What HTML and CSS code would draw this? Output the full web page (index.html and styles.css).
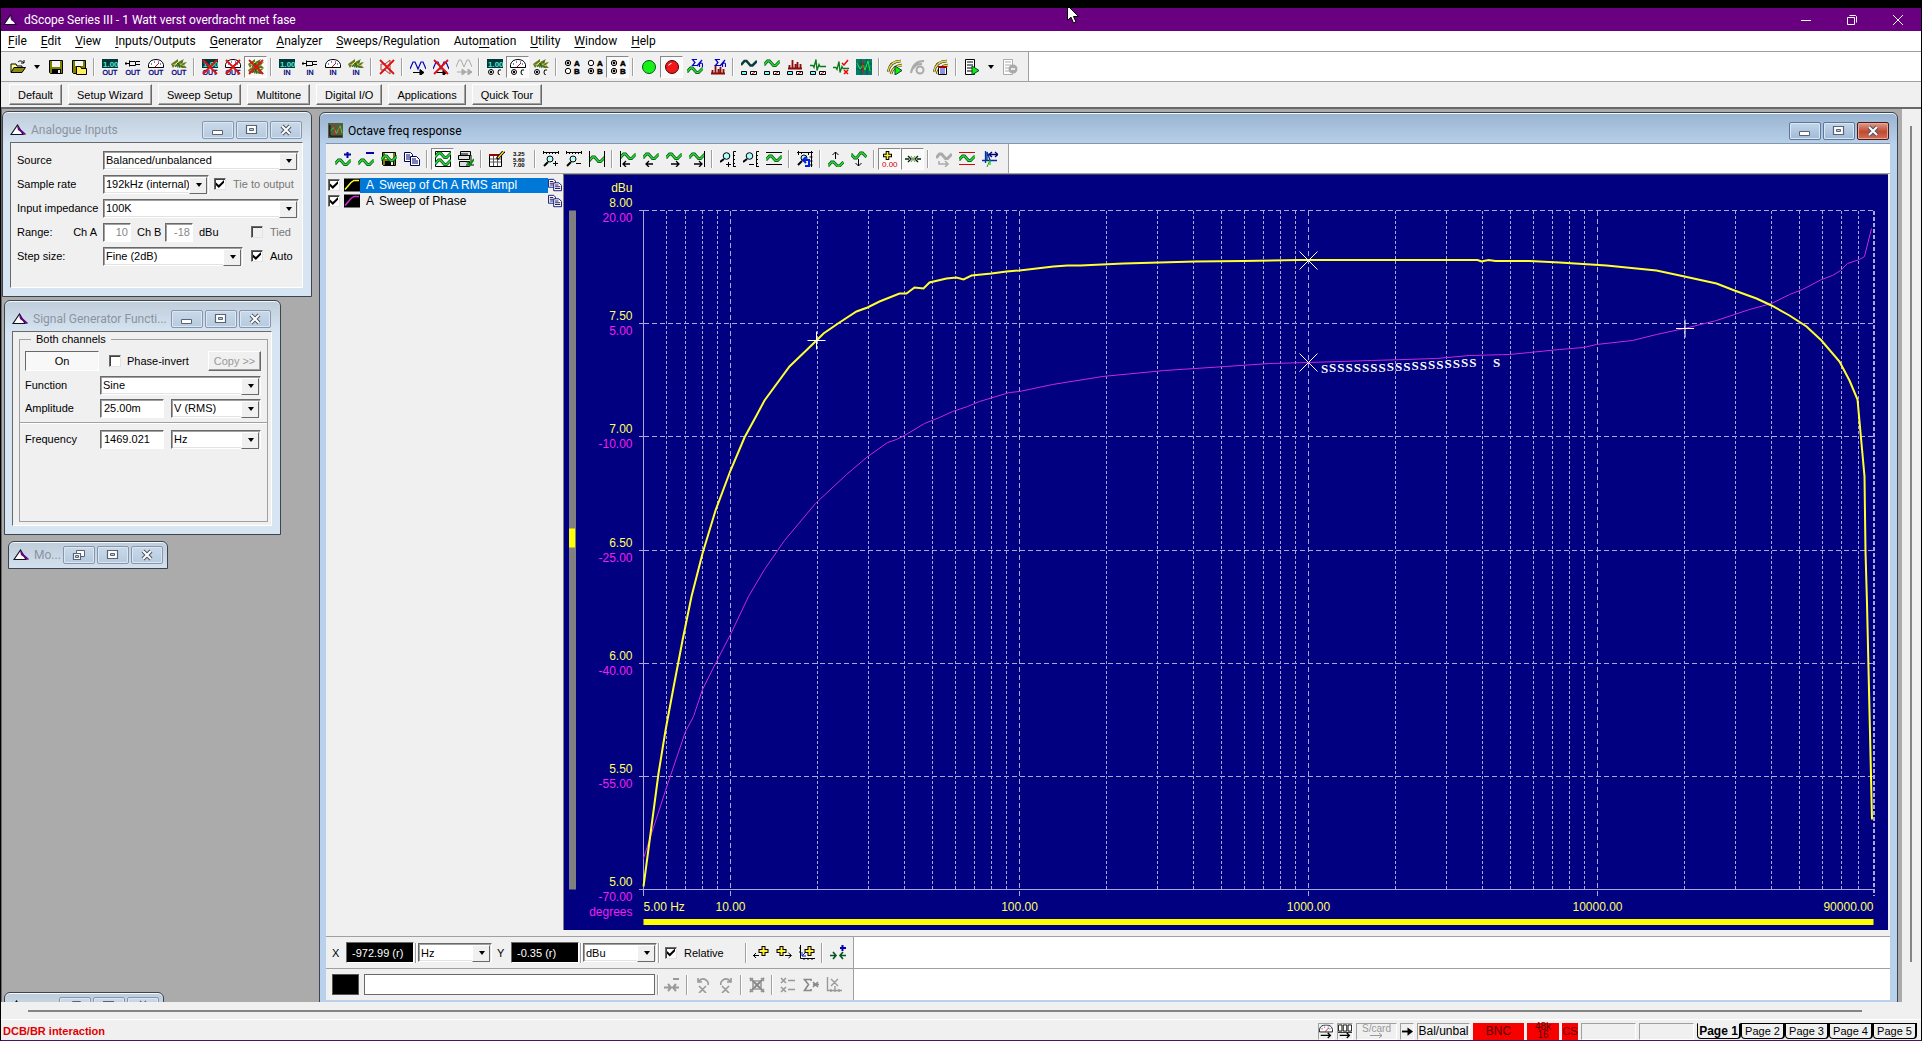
FILE: index.html
```html
<!DOCTYPE html>
<html lang="en">
<head>
<meta charset="utf-8">
<title>dScope Series III - 1 Watt verst overdracht met fase</title>
<link rel="stylesheet" href="styles.css">
</head>
<body>
<svg class="defs" aria-hidden="true">
  <symbol id="logo" viewBox="0 0 16 12"><path d="M7.500 1 1 10.500h12z" fill="#fff" stroke="#112" stroke-width="1.200"/><path d="M7 2l9 8-1 1-7-5z" fill="#608"/></symbol>
  <symbol id="open" viewBox="0 0 16 16"><path d="M1 13V5h5l1 2h5v2" fill="#ff8" stroke="#000"/><path d="M1 13.500 4 8.500h11.500l-3.500 5z" fill="#8a8a10" stroke="#000"/><path d="M8 3c2-2 4-1 6 1m0-3v3h-3" fill="none" stroke="#000"/></symbol>
  <symbol id="save" viewBox="0 0 16 16"><path d="M1.500 1.500h13v13h-12l-1-1z" fill="#808000" stroke="#000"/><path d="M4 2h8v6H4z" fill="#f4f4f4"/><path d="M4 10h9v5H4z"/><path d="M10 11h2v3h-2z" fill="#eee"/></symbol>
  <symbol id="saveas" viewBox="0 0 16 16"><path d="M1.500 1.500h13v13h-12l-1-1z" fill="#808000" stroke="#000"/><path d="M4 2h8v5H4z" fill="#f4f4f4"/><path d="M5.500 15.500v-8h4l1 2h5v6z" fill="#ffee60" stroke="#000"/></symbol>
  <symbol id="lcd" viewBox="0 0 16 16"><path d="M0 0h16v9H0z" fill="#003838"/><text x="1" y="8" font-size="8" font-weight="700" fill="#50e8d0">1.00</text></symbol>
  <symbol id="jack" viewBox="0 0 16 16"><path d="M0 4.500h4m7-2h4m-4 3h4M4.500 1.500v6m0-5h6v4h-6M1 3v3" fill="none" stroke="#000"/></symbol>
  <symbol id="meter" viewBox="0 0 16 16"><path d="M.5 8.500v-3Q2 .5 8 .5t7.500 5v3z" fill="#fff" stroke="#000"/><path d="M3 5h1m2-2h1m3 0h1m1 2h1" stroke="#00a"/><path d="M7 8l4-4" stroke="#d00"/></symbol>
  <symbol id="burst" viewBox="0 0 16 16"><path d="M0 5 7 0v3l6-3-2 4 5-1-3 3 3 3h-5l-3-2-1 2-3-3-2 3z" fill="#6b7520"/><path d="M1 5h3l4-3-2 4zM9 5l4-2-2 3 4 1-4 0z" fill="#ff6"/><path d="M4 8l3-4 2 5m2-7 0 6" fill="none" stroke="#063"/></symbol>
  <symbol id="out" viewBox="0 0 16 16"><text x="8" y="16" font-size="7" text-anchor="middle" fill="#00007c" stroke="#00007c" stroke-width=".3">OUT</text></symbol>
  <symbol id="in" viewBox="0 0 16 16"><text x="8" y="16" font-size="7" text-anchor="middle" fill="#00007c" stroke="#00007c" stroke-width=".3">IN</text></symbol>
  <symbol id="radios" viewBox="0 0 16 16"><circle cx="4" cy="13" r="2.500" fill="#fff" stroke="#000"/><circle cx="4" cy="13" r="1.200"/><path d="M14 11q-3-1-3 2t2 3" fill="#fff" stroke="#000"/></symbol>
  <symbol id="cross" viewBox="0 0 16 16"><path d="M1 1l14 14M15 1 1 15" stroke="#e01010" stroke-width="1.800"/></symbol>
  <symbol id="speaker" viewBox="0 0 16 16"><path d="M2 5h4l5-4v14l-5-4H2z" fill="#f4e4e4" stroke="#944"/></symbol>
  <symbol id="sine" viewBox="0 0 16 16"><path d="M0 10 3 3h2l3 7 3-7h2l3 7" fill="none" stroke="currentColor" stroke-width="1.200"/><path d="M3 13.500h10m-3-3 4 3-4 3z" fill="#000" stroke="#000"/></symbol>
  <symbol id="sineg" viewBox="0 0 16 16"><path d="M0 8 3 1h2l3 7 3-7h2l3 7" fill="none" stroke="#aaa"/><path d="M1 13h5m4 0h4M6 10l4 3-4 3zM12 10l4 3-4 3z" fill="#aaa" stroke="#aaa"/></symbol>
  <symbol id="ab" viewBox="0 0 16 16"><circle cx="4" cy="4" r="2.700" fill="#fff" stroke="#000"/><circle cx="4" cy="12" r="2.700" fill="#fff" stroke="#000"/><text x="10" y="7" font-size="8" font-weight="700" stroke="#000" stroke-width=".5">A</text><text x="10" y="15" font-size="8" font-weight="700" stroke="#000" stroke-width=".5">B</text></symbol>
  <symbol id="dot1" viewBox="0 0 16 16"><circle cx="4" cy="4" r="1.400"/></symbol>
  <symbol id="dot2" viewBox="0 0 16 16"><circle cx="4" cy="12" r="1.400"/></symbol>
  <symbol id="green" viewBox="0 0 16 16"><circle cx="8" cy="8" r="6.500" fill="#18f018" stroke="#052"/></symbol>
  <symbol id="red" viewBox="0 0 16 16"><circle cx="8" cy="8" r="6.500" fill="#f01818" stroke="#400"/><path d="M4.500 6.500q1-2 3-2" stroke="#fff" fill="none"/></symbol>
  <symbol id="wave" viewBox="0 0 16 16"><path d="M0 9 3.500 5h2l4 4.500h2L16 5" fill="none" stroke="#042" stroke-width="2.800"/><path d="M0 9 3.500 5h2l4 4.500h2L16 5" fill="none" stroke="#28dc28" stroke-width="1.600"/></symbol>
  <symbol id="wavegray" viewBox="0 0 16 16"><path d="M0 9 3.500 5h2l4 4.500h2L16 5" fill="none" stroke="#aaa" stroke-width="3"/></symbol>
  <symbol id="waveteal" viewBox="0 0 16 16"><path d="M0 9 3.500 5h2l4 4.500h2L16 5" fill="none" stroke="#063c3c" stroke-width="2.500"/></symbol>
  <symbol id="spec" viewBox="0 0 16 16"><path d="M1 9.500h14M2.500 9V6M5.500 9V1M8.500 9V5M10.500 9V3M13.500 9V5" fill="none" stroke="#8a0a0a" stroke-width="1.800"/></symbol>
  <symbol id="imp" viewBox="0 0 16 16"><path d="M0 6.500h3l1 2 2-8 1 11 2-6 1 2h6" fill="none" stroke="#087818" stroke-width="1.300"/></symbol>
  <symbol id="pair" viewBox="0 0 16 16"><path d="M.5 12.500h5v3h-5z" fill="#7ff" stroke="#000"/><path d="M9.500 12.500h6v3h-6z" fill="#fff" stroke="#000"/><path d="M11 15l3-2" stroke="#c00"/></symbol>
  <symbol id="sigma" viewBox="0 0 16 16"><path d="M10 .5H5.500L8 3.500 5.500 6.500H10M15 1l-5 6M12.500 8V5q2-2 3 0v3" fill="none" stroke="#0000c8" stroke-width="1.200"/></symbol>
  <symbol id="ticks" viewBox="0 0 16 16"><path d="M9 4l2 2 4-5M11 11l4 4m0-4-4 4" fill="none" stroke="#e00" stroke-width="1.500"/></symbol>
  <symbol id="screen" viewBox="0 0 16 16"><path d="M0 0h16v16H0z" fill="#087868"/><path d="M0 5h16M0 10h16M5 0v16M11 0v16" stroke="#055"/><path d="M1 4 4 10 7 6l2 5 3-9 2 10" fill="none" stroke="#2e2"/><path d="M7 2v12" stroke="#e00"/></symbol>
  <symbol id="appicon" viewBox="0 0 16 16"><path d="M0 0h16v16H0z" fill="#555c40"/><path d="M2 14V2m0 12h13" stroke="#000"/><path d="M3 8 6 5l3 6 4-8 2 8" fill="none" stroke="#3d3"/><path d="M7 3v10m5-8v6" stroke="#c22"/></symbol>
  <symbol id="curves" viewBox="0 0 16 16"><path d="M1 13Q3 2 14 2M4 15Q6 7 15 6" fill="none" stroke="#222" stroke-width="2.400"/><path d="M1 13Q3 2 14 2M4 15Q6 7 15 6" fill="none" stroke="#e8e040" stroke-width="1.300"/></symbol>
  <symbol id="curvesg" viewBox="0 0 16 16"><path d="M1 14Q3 2 14 2M3 10Q5 5 12 5" fill="none" stroke="#aaa" stroke-width="2"/><circle cx="10" cy="11" r="3.500" fill="#f0f0f0" stroke="#aaa" stroke-width="2"/></symbol>
  <symbol id="play" viewBox="0 0 16 16"><path d="M8 7l7 4.500L8 16z" fill="#1e1" stroke="#042"/></symbol>
  <symbol id="note" viewBox="0 0 16 16"><path d="M5.500 7.500h8v8h-8z" fill="#fff" stroke="#000"/><path d="M7 10h5m-5 2h5m-5 2h5" stroke="#22c"/><path d="M5 8h9" stroke="#a00" stroke-width="2"/></symbol>
  <symbol id="doc" viewBox="0 0 16 16"><path d="M1.500.5h9v15h-9z" fill="#fff" stroke="currentColor"/><path d="M3 3h6M3 6h6M3 9h5M3 12h6" stroke="currentColor"/></symbol>
  <symbol id="stopg" viewBox="0 0 16 16"><circle cx="11" cy="10" r="4.500" fill="#aaa"/><path d="M9 10h4" stroke="#fff" stroke-width="1.500"/></symbol>
  <symbol id="copy" viewBox="0 0 16 16"><path d="M.5 1.500h6l2 2v7h-8z" fill="#fff" stroke="#000060"/><path d="M6.500 5.500h6l3 3v6h-9z" fill="#fff" stroke="#000060"/><path d="M2 4h4M2 6h4M2 8h4M8 8h4m-4 2h6m-6 2h6" stroke="#000060"/></symbol>
  <symbol id="plus" viewBox="0 0 16 16"><path d="M12.500-1v7M9 2.500h7" stroke="#0000b0" stroke-width="2"/></symbol>
  <symbol id="minus" viewBox="0 0 16 16"><path d="M8 1h8" stroke="#0000b0" stroke-width="2"/></symbol>
  <symbol id="frame" viewBox="0 0 16 16"><path d="M.5.500h15v15H.5z" fill="none" stroke="#000"/></symbol>
  <symbol id="print" viewBox="0 0 16 16"><path d="M2.500.500h10v4h-10zM.5 4.500h11v4H.5zM1.500 10.500h10v5h-10z" fill="#ddd" stroke="#000"/><path d="M3 3h7M8 14h8M13 4v10" stroke="#000"/><path d="M9 11l3 3 4-6" fill="none" stroke="#090" stroke-width="2"/></symbol>
  <symbol id="table" viewBox="0 0 16 16"><path d="M.5 3.500h12v12H.5z" fill="#fff" stroke="#000"/><path d="M0 4h13" stroke="#900" stroke-width="2"/><path d="M1 8h11M1 11h11M4.500 5v10M8.500 5v10" stroke="#555"/><path d="M15 0 8 8" stroke="#000" stroke-width="3"/><path d="M15 0 9 7" stroke="#fd3" stroke-width="1.300"/></symbol>
  <symbol id="nums" viewBox="0 0 16 16"><text x="1" y="5" font-size="6" font-weight="700">3.25</text><text x="1" y="10.500" font-size="6" font-weight="700">5.60</text><text x="1" y="16" font-size="6" font-weight="700">7.00</text></symbol>
  <symbol id="magh" viewBox="0 0 16 16"><path d="M0 1.500h16M.5 0v3m3-2v2m3-2v2m3-2v2m3-2v2M15.500 0v3" stroke="#000"/><path d="M5 11 1 15" stroke="#000" stroke-width="2"/><circle cx="7" cy="8" r="3" fill="#aff" stroke="#000"/></symbol>
  <symbol id="magv" viewBox="0 0 16 16"><path d="M13.500.500v15m0-15H16m-2 4h1m-1 4h1m-1 4h1m-2 3h3" stroke="#000"/><path d="M4 8 0 11" stroke="#000" stroke-width="2"/><circle cx="6.500" cy="5" r="3.300" fill="#aff" stroke="#000"/></symbol>
  <symbol id="zin" viewBox="0 0 16 16"><path d="M10 12.500h5M12.500 10v5" stroke="#000"/></symbol>
  <symbol id="zout" viewBox="0 0 16 16"><path d="M10 12.500h5" stroke="#000"/></symbol>
  <symbol id="zinv" viewBox="0 0 16 16"><path d="M6 13.500h5M8.500 11v5" stroke="#000"/></symbol>
  <symbol id="zoutv" viewBox="0 0 16 16"><path d="M6 13.500h5" stroke="#000"/></symbol>
  <symbol id="sides" viewBox="0 0 16 16"><path d="M.5 0v16M15.500 0v16" stroke="#000"/></symbol>
  <symbol id="lside" viewBox="0 0 16 16"><path d="M.5 0v16" stroke="#000"/></symbol>
  <symbol id="rside" viewBox="0 0 16 16"><path d="M15.500 0v16" stroke="#000"/></symbol>
  <symbol id="arl" viewBox="0 0 16 16"><path d="M3 13h7M6 10l-3 3 3 3" fill="none" stroke="#000" stroke-width="1.300"/></symbol>
  <symbol id="arr" viewBox="0 0 16 16"><path d="M5 13h8m-3-3 3 3-3 3" fill="none" stroke="#000" stroke-width="1.300"/></symbol>
  <symbol id="bars" viewBox="0 0 16 16"><path d="M0 1.500h16M0 13.500h16" stroke="currentColor"/></symbol>
  <symbol id="undo" viewBox="0 0 16 16"><path d="M0 1.500h16M1.500 0v4m13-4v16m-3-14v2m-7-3v2m11 3h-3m3 4h-3m3 4h-3" stroke="#000"/><circle cx="7" cy="7" r="3" fill="#aff" stroke="#000"/><path d="M8 15h4V9H6m3-3L6 9l3 3" fill="none" stroke="#0020e0" stroke-width="2"/><path d="M5 10l-4 4" stroke="#000" stroke-width="2"/></symbol>
  <symbol id="wup" viewBox="0 0 16 16"><path d="M0 15l3.500-4h2l4 4h2l4-4" fill="none" stroke="#042" stroke-width="2.800"/><path d="M0 15l3.500-4h2l4 4h2l4-4" fill="none" stroke="#28dc28" stroke-width="1.600"/><path d="M7.500 8V1m-3 3 3-3 3 3" fill="none" stroke="#000"/></symbol>
  <symbol id="wdn" viewBox="0 0 16 16"><path d="M0 3l3.500 4h2l4-5h2l4 4" fill="none" stroke="#042" stroke-width="2.800"/><path d="M0 3l3.500 4h2l4-5h2l4 4" fill="none" stroke="#28dc28" stroke-width="1.600"/><path d="M7.500 8v7m-3-3 3 3 3-3" fill="none" stroke="#000"/></symbol>
  <symbol id="curval" viewBox="0 0 16 16"><path d="M5.500 0v9M1 4.500h9" stroke="#000" stroke-width="3.600"/><path d="M5.500 1v7M2 4.500h7" stroke="#fe3" stroke-width="1.600"/><text x="0" y="16" font-size="8" fill="#c00">0.00</text></symbol>
  <symbol id="curx" viewBox="0 0 16 16"><path d="M0 8h4M3 5l3 3-3 3M16 8h-4m1-3-3 3 3 3" fill="none" stroke="#021" stroke-width="1.400"/><path d="M6 5l4 6m0-6-4 6" stroke="#693"/></symbol>
  <symbol id="gloop" viewBox="0 0 16 16"><path d="M3 10v3h9m-3-3 3 3-3 3" fill="none" stroke="#aaa" stroke-width="1.500"/></symbol>
  <symbol id="blueaxis" viewBox="0 0 16 16"><path d="M3.500 0v12M0 9.500h15M5 9V1l3 8" fill="none" stroke="#0030a0" stroke-width="1.300"/><path d="M8 3.500h7M10 1 7 3.500 10 6m3-5 3 2.500L13 6" fill="none" stroke="#00007c" stroke-width="1.300"/><path d="M5 16l3-7v5" stroke="#0a0" fill="none"/></symbol>
  <symbol id="yplus" viewBox="0 0 16 16"><path d="M10.500 1v10M5.500 6h10" stroke="#000" stroke-width="4"/><path d="M10.500 2v8M6.500 6h8" stroke="#fe3" stroke-width="2"/></symbol>
  <symbol id="yplusl" viewBox="0 0 16 16"><path d="M5.500 1v10M.5 6h10" stroke="#000" stroke-width="4"/><path d="M5.500 2v8M1.500 6h8" stroke="#fe3" stroke-width="2"/></symbol>
  <symbol id="al2" viewBox="0 0 16 16"><path d="M0 10.500h6M3 8l-2.500 2.500L3 13" fill="none" stroke="#000"/></symbol>
  <symbol id="ar2" viewBox="0 0 16 16"><path d="M9 10.500h6M12.500 8l3 2.500-3 2.500" fill="none" stroke="#000"/></symbol>
  <symbol id="axes" viewBox="0 0 16 16"><path d="M1.500 0v13.500H16M5 15v-2m4 2v-2m4 2v-2M0 3h1M0 7h1" fill="none" stroke="#000"/><path d="M8 6l-5 5m0-4v4h4" fill="none" stroke="#0020c0"/></symbol>
  <symbol id="addm" viewBox="0 0 16 16"><path d="M0 10.500h6M16 10.500h-6M3 7l3 3.500L3 14m10-7-3 3.500 3 3.500" fill="none" stroke="#052" stroke-width="1.600"/><path d="M12.500 0v6M10 3h6" stroke="#0000b0" stroke-width="2"/></symbol>
  <symbol id="gdel" viewBox="0 0 16 16"><path d="M0 10.500h6M15 10.500h-5M4 7l3 3.500L4 14m8-7-3 3.500 3 3.500M9 2h6" fill="none" stroke="#999" stroke-width="2"/></symbol>
  <symbol id="grotl" viewBox="0 0 16 16"><path d="M4 9l7 7m0-7-7 7M3 1v4h4M3 5q4-5 8-2 3 2 2 5" fill="none" stroke="#999" stroke-width="1.600"/></symbol>
  <symbol id="grotr" viewBox="0 0 16 16"><path d="M4 9l7 7m0-7-7 7M13 1v4H9M13 5Q9 0 5 3 2 5 3 8" fill="none" stroke="#999" stroke-width="1.600"/></symbol>
  <symbol id="gx" viewBox="0 0 16 16"><path d="M1 1l14 14M15 1 1 15" stroke="#888" stroke-width="2"/><path d="M1 4l3-3m8 0 3 3M1 12l3 3m8 0 3-3M5 4h6M5 12h6M4 5v6m8-6v6" fill="none" stroke="#999" stroke-width="1.600"/></symbol>
  <symbol id="glist" viewBox="0 0 16 16"><path d="M1 1l5 5m0-5L1 6m0 4 5 5m0-5-5 5M8 3.500h7M8 12.500h7" stroke="#999" stroke-width="1.600"/></symbol>
  <symbol id="gsum" viewBox="0 0 16 16"><path d="M8 4V2.500H1.500l4 5-4 6H8V12M10 5l5 5m0-5-5 5M10 7.500h6" fill="none" stroke="#888" stroke-width="1.600"/></symbol>
  <symbol id="gchart" viewBox="0 0 16 16"><path d="M1.500 0v13.500H16M5 15v-3m4 3V9m4 6v-3M5 2l7 7m0-7-7 7" fill="none" stroke="#999" stroke-width="1.400"/></symbol>
  <symbol id="min" viewBox="0 0 14 12"><path d="M1.500 6.500h10v4h-10z" fill="#fff" stroke="#5a6373"/></symbol>
  <symbol id="max" viewBox="0 0 14 12"><path d="M1.500 1.500h10v8h-10z" fill="#fff" stroke="#5a6373" stroke-width="1.200"/><path d="M4.500 4.500h4v2h-4z" fill="#bcd" stroke="#5a6373"/></symbol>
  <symbol id="cls" viewBox="0 0 14 12"><path d="M3 2l8 8m0-8-8 8" stroke="#4d5564" stroke-width="4"/><path d="M3 2l8 8m0-8-8 8" stroke="#fff" stroke-width="2"/></symbol>
  <symbol id="rst" viewBox="0 0 14 12"><path d="M4.500 1.500h8v6h-8z" fill="#fff" stroke="#5a6373"/><path d="M1.500 4.500h7v6h-7z" fill="#fff" stroke="#5a6373" stroke-width="1.200"/><path d="M3.500 6.500h3v2h-3z" fill="#bcd" stroke="#5a6373"/></symbol>
  <symbol id="smeter" viewBox="0 0 16 16"><use href="#meter"/><path d="M2 12.500h11m-3-3 3 3-3 3" fill="none" stroke="#000" stroke-width="1.500"/></symbol>
  <symbol id="sdig" viewBox="0 0 16 16"><path d="M.5.500h4v7h-4zm5.500 0h4v7H6zm5.500 0h4v7h-4zM0 9h16" fill="#fff" stroke="#000"/><path d="M2 12.500h11m-3-3 3 3-3 3" fill="none" stroke="#000" stroke-width="1.500"/></symbol>
</svg>

<div class="app">
  <header class="titlebar">
    <svg class="logo"><use href="#logo"/></svg>
    <span>dScope Series III - 1 Watt verst overdracht met fase</span>
    <div class="sysbtns">
      <button type="button" aria-label="Minimise"><svg viewBox="0 0 12 12"><path d="M1 6.500h10" stroke="#fff"/></svg></button>
      <button type="button" aria-label="Restore"><svg viewBox="0 0 12 12"><path d="M1.500 3.500h7v7h-7zM3.500 1.500h6l1 1v6" fill="none" stroke="#fff"/></svg></button>
      <button type="button" aria-label="Close"><svg viewBox="0 0 12 12"><path d="M1 1l10 10M11 1 1 11" stroke="#fff"/></svg></button>
    </div>
  </header>

  <nav class="menubar">
    <a href="#"><u>F</u>ile</a><a href="#"><u>E</u>dit</a><a href="#"><u>V</u>iew</a><a href="#"><u>I</u>nputs/Outputs</a><a href="#"><u>G</u>enerator</a><a href="#"><u>A</u>nalyzer</a><a href="#"><u>S</u>weeps/Regulation</a><a href="#">Auto<u>m</u>ation</a><a href="#"><u>U</u>tility</a><a href="#"><u>W</u>indow</a><a href="#"><u>H</u>elp</a>
  </nav>

  <div class="toolrow">
    <div class="toolbar">
      <button type="button"><svg><use href="#open"/></svg></button><button type="button" class="drop" aria-label="Recent"></button>
      <button type="button"><svg><use href="#save"/></svg></button>
      <button type="button"><svg><use href="#saveas"/></svg></button>
      <i></i>
      <button type="button"><svg><use href="#lcd"/><use href="#out"/></svg></button>
      <button type="button"><svg><use href="#jack"/><use href="#out"/></svg></button>
      <button type="button"><svg><use href="#meter"/><use href="#out"/></svg></button>
      <button type="button"><svg><use href="#burst"/><use href="#out"/></svg></button>
      <i></i>
      <button type="button"><svg><use href="#lcd"/><use href="#out"/><use href="#cross"/></svg></button>
      <button type="button"><svg><use href="#meter"/><use href="#out"/><use href="#cross"/></svg></button>
      <button type="button" class="on"><svg><use href="#burst"/><use href="#burst" y="6"/><use href="#cross"/></svg></button>
      <i></i>
      <button type="button"><svg><use href="#lcd"/><use href="#in"/></svg></button>
      <button type="button"><svg><use href="#jack"/><use href="#in"/></svg></button>
      <button type="button"><svg><use href="#meter"/><use href="#in"/></svg></button>
      <button type="button"><svg><use href="#burst"/><use href="#in"/></svg></button>
      <i></i>
      <button type="button"><svg><use href="#speaker"/><use href="#cross"/></svg></button>
      <i></i>
      <button type="button" class="blue"><svg><use href="#sine"/></svg></button>
      <button type="button" class="blue"><svg><use href="#sine"/><use href="#cross"/></svg></button>
      <button type="button"><svg><use href="#sineg"/></svg></button>
      <i></i>
      <button type="button"><svg><use href="#lcd"/><use href="#radios"/></svg></button>
      <button type="button" class="on"><svg><use href="#meter"/><use href="#radios"/></svg></button>
      <button type="button"><svg><use href="#burst"/><use href="#radios"/></svg></button>
      <i></i>
      <button type="button"><svg><use href="#ab"/><use href="#dot1"/></svg></button>
      <button type="button"><svg><use href="#ab"/><use href="#dot2"/></svg></button>
      <button type="button" class="on"><svg><use href="#ab"/><use href="#dot1"/><use href="#dot2"/></svg></button>
      <i></i>
      <button type="button"><svg><use href="#green"/></svg></button>
      <button type="button" class="on"><svg><use href="#red"/></svg></button>
      <button type="button"><svg><use href="#wave" y="4"/><use href="#sigma"/></svg></button>
      <button type="button"><svg><use href="#spec" y="5"/><use href="#sigma"/></svg></button>
      <i></i>
      <button type="button"><svg><use href="#waveteal" y="-3"/><use href="#pair"/></svg></button>
      <button type="button"><svg><use href="#wave" y="-3"/><use href="#pair"/></svg></button>
      <button type="button"><svg><use href="#spec"/><use href="#pair"/></svg></button>
      <button type="button"><svg><use href="#imp"/><use href="#pair"/></svg></button>
      <button type="button"><svg><use href="#imp" y="2"/><use href="#ticks"/></svg></button>
      <button type="button"><svg><use href="#screen"/></svg></button>
      <i></i>
      <button type="button"><svg><use href="#curves"/><use href="#play"/></svg></button>
      <button type="button"><svg><use href="#curvesg"/></svg></button>
      <button type="button"><svg><use href="#curves"/><use href="#note"/></svg></button>
      <i></i>
      <button type="button"><svg><use href="#doc"/><use href="#play"/></svg></button><button type="button" class="drop" aria-label="Scripts"></button>
      <button type="button" class="dis"><svg><use href="#doc"/><use href="#stopg"/></svg></button>
    </div>
  </div>

  <div class="setups">
    <button type="button">Default</button><button type="button">Setup Wizard</button><button type="button">Sweep Setup</button><button type="button">Multitone</button><button type="button">Digital I/O</button><button type="button">Applications</button><button type="button">Quick Tour</button>
  </div>

  <main class="mdi">
    <div class="workspace">

      <section class="win analogue">
        <div class="caption"><svg class="logo"><use href="#logo"/></svg><h2>Analogue Inputs</h2>
          <button type="button"><svg><use href="#min"/></svg></button><button type="button"><svg><use href="#max"/></svg></button><button type="button"><svg><use href="#cls"/></svg></button></div>
        <form class="client inputs">
          <div class="row"><label for="src" class="name">Source</label><span class="combo grow"><select id="src"><option>Balanced/unbalanced</option></select></span></div>
          <div class="row"><label for="rate" class="name">Sample rate</label><span class="combo rate"><select id="rate"><option>192kHz (internal)</option></select></span><label class="check off"><input type="checkbox" checked>Tie to output</label></div>
          <div class="row"><label for="imp-in" class="name">Input impedance</label><span class="combo grow"><select id="imp-in"><option>100K</option></select></span></div>
          <div class="row"><span class="name split"><span>Range:</span><label for="cha">Ch A</label></span><input id="cha" class="num" value="10"><label for="chb" class="mid">Ch B</label><input id="chb" class="num" value="-18"><span class="mid">dBu</span><label class="check off right"><input type="checkbox">Tied</label></div>
          <div class="row"><label for="step" class="name">Step size:</label><span class="combo step"><select id="step"><option>Fine (2dB)</option></select></span><label class="check right"><input type="checkbox" checked>Auto</label></div>
        </form>
      </section>

      <section class="win generator">
        <div class="caption"><svg class="logo"><use href="#logo"/></svg><h2>Signal Generator Functi...</h2>
          <button type="button"><svg><use href="#min"/></svg></button><button type="button"><svg><use href="#max"/></svg></button><button type="button"><svg><use href="#cls"/></svg></button></div>
        <form class="client">
          <fieldset>
            <legend>Both channels</legend>
            <div class="row"><button type="button" class="onbtn">On</button><label class="check"><input type="checkbox">Phase-invert</label><button type="button" class="copybtn" disabled>Copy &gt;&gt;</button></div>
            <div class="row"><label for="fn" class="name">Function</label><span class="combo grow"><select id="fn"><option>Sine</option></select></span></div>
            <div class="row"><label for="amp" class="name">Amplitude</label><input id="amp" class="txt" value="25.00m"><span class="combo grow"><select aria-label="Amplitude unit"><option>V (RMS)</option></select></span></div>
            <hr>
            <div class="row"><label for="frq" class="name">Frequency</label><input id="frq" class="txt" value="1469.021"><span class="combo grow"><select aria-label="Frequency unit"><option>Hz</option></select></span></div>
          </fieldset>
        </form>
      </section>

      <section class="win icon monitor">
        <div class="caption"><svg class="logo"><use href="#logo"/></svg><h2>Mo...</h2>
          <button type="button"><svg><use href="#rst"/></svg></button><button type="button"><svg><use href="#max"/></svg></button><button type="button"><svg><use href="#cls"/></svg></button></div>
      </section>
      <section class="win icon hiddenwin">
        <div class="caption"><svg class="logo"><use href="#logo"/></svg><h2></h2>
          <button type="button"><svg><use href="#rst"/></svg></button><button type="button"><svg><use href="#max"/></svg></button><button type="button"><svg><use href="#cls"/></svg></button></div>
      </section>

      <section class="win active octave">
        <div class="caption"><svg class="appicon"><use href="#appicon"/></svg><h2>Octave freq response</h2>
          <button type="button"><svg><use href="#min"/></svg></button><button type="button"><svg><use href="#max"/></svg></button><button type="button" class="close"><svg><use href="#cls"/></svg></button></div>
        <div class="body">
          <div class="toolrow">
            <div class="toolbar">
              <button type="button"><svg><use href="#wave" y="4"/><use href="#plus" y="1"/></svg></button>
              <button type="button"><svg><use href="#wave" y="4"/><use href="#minus" y="1"/></svg></button>
              <button type="button"><svg><use href="#save"/><use href="#wave"/></svg></button>
              <button type="button"><svg><use href="#copy"/></svg></button>
              <i></i>
              <button type="button" class="on"><svg><use href="#frame"/><use href="#wave" y="-3"/><use href="#wave" y="4"/></svg></button>
              <button type="button"><svg><use href="#print"/></svg></button>
              <i></i>
              <button type="button"><svg><use href="#table"/></svg></button>
              <button type="button"><svg><use href="#nums"/></svg></button>
              <i></i>
              <button type="button"><svg><use href="#magh"/><use href="#zin"/></svg></button>
              <button type="button"><svg><use href="#magh"/><use href="#zout"/></svg></button>
              <button type="button"><svg><use href="#wave" y="1"/><use href="#sides"/></svg></button>
              <i></i>
              <button type="button"><svg><use href="#wave" y="-2"/><use href="#lside"/><use href="#arl"/></svg></button>
              <button type="button"><svg><use href="#wave" y="-2"/><use href="#arl"/></svg></button>
              <button type="button"><svg><use href="#wave" y="-2"/><use href="#arr"/></svg></button>
              <button type="button"><svg><use href="#wave" y="-2"/><use href="#rside"/><use href="#arr"/></svg></button>
              <i></i>
              <button type="button"><svg><use href="#magv"/><use href="#zinv"/></svg></button>
              <button type="button"><svg><use href="#magv"/><use href="#zoutv"/></svg></button>
              <button type="button"><svg><use href="#wave"/><use href="#bars"/></svg></button>
              <i></i>
              <button type="button"><svg><use href="#undo"/></svg></button>
              <i></i>
              <button type="button"><svg><use href="#wup"/></svg></button>
              <button type="button"><svg><use href="#wdn"/></svg></button>
              <i></i>
              <button type="button" class="on"><svg><use href="#curval"/></svg></button>
              <button type="button" class="on"><svg><use href="#curx"/></svg></button>
              <i></i>
              <button type="button"><svg><use href="#wavegray" y="-2"/><use href="#gloop"/></svg></button>
              <button type="button" class="redbars"><svg><use href="#wave"/><use href="#bars"/></svg></button>
              <button type="button"><svg><use href="#blueaxis"/></svg></button>
            </div>
          </div>
          <div class="split-view">
            <ul class="traces">
              <li class="sel"><input type="checkbox" checked aria-label="Show Ch A RMS ampl"><svg class="swatch" viewBox="0 0 16 13"><path d="M0 0h16v13H0z"/><path d="M1 11l6-7 3-2h5" fill="none" stroke="#ffff30" stroke-width="1.500"/></svg><span class="trace"><b>A</b>Sweep of Ch A RMS ampl</span><button type="button" aria-label="Copy trace"><svg><use href="#copy"/></svg></button></li>
              <li><input type="checkbox" checked aria-label="Show Phase"><svg class="swatch" viewBox="0 0 16 13"><path d="M0 0h16v13H0z"/><path d="M1 11l6-7 3-2h5" fill="none" stroke="#d030d0" stroke-width="1.500"/></svg><span class="trace"><b>A</b>Sweep of Phase</span><button type="button" aria-label="Copy trace"><svg><use href="#copy"/></svg></button></li>
            </ul>
            <div class="plot"><svg id="chart" role="img" aria-label="Amplitude and phase against frequency"></svg></div>
          </div>
          <div class="cursorrow">
            <div class="cursorbar">
              <label for="cx">X</label><input id="cx" class="readout" value="-972.99 (r)"><i></i><span class="combo unit"><select aria-label="X unit"><option>Hz</option></select></span><label for="cy" class="ylab">Y</label><input id="cy" class="readout" value="-0.35 (r)"><i></i><span class="combo unit"><select aria-label="Y unit"><option>dBu</option></select></span><i></i><label class="check rel"><input type="checkbox" checked>Relative</label><i></i>
              <button type="button"><svg><use href="#yplus"/><use href="#al2"/></svg></button><button type="button"><svg><use href="#yplusl"/><use href="#ar2"/></svg></button><button type="button"><svg><use href="#axes"/><use href="#yplus"/></svg></button><i></i><button type="button"><svg><use href="#addm"/></svg></button>
            </div>
          </div>
          <div class="cursorrow">
            <div class="cursorbar">
              <span class="colour"></span><input class="marker" aria-label="Marker text"><i></i><button type="button"><svg><use href="#gdel"/></svg></button><i></i><button type="button"><svg><use href="#grotl"/></svg></button><button type="button"><svg><use href="#grotr"/></svg></button><i></i><button type="button"><svg><use href="#gx"/></svg></button><i></i><button type="button"><svg><use href="#glist"/></svg></button><button type="button"><svg><use href="#gsum"/></svg></button><button type="button"><svg><use href="#gchart"/></svg></button>
            </div>
          </div>
        </div>
      </section>
    </div>
    <div class="vscroll"><span></span></div>
    <div class="hscroll"><span></span></div>
  </main>

  <footer class="status">
    <span class="alert">DCB/BR interaction</span>
    <span class="cell sq"><svg><use href="#smeter"/></svg></span>
    <span class="cell sq"><svg><use href="#sdig"/></svg></span>
    <span class="cell card">S/card<svg viewBox="0 0 14 5"><path d="M0 2.500h12M9 0l3 2.500L9 5" fill="none" stroke="#999"/></svg></span>
    <span class="cell arrow"><svg viewBox="0 0 12 9"><path d="M0 4.500h9" stroke="#000" stroke-width="2"/><path d="M6 0l6 4.500L6 9z"/></svg></span>
    <span class="cell bal">Bal/unbal</span>
    <span class="cell hot bnc">BNC</span>
    <span class="cell hot fs"><span>48k</span><span>16</span></span>
    <span class="cell hot cs">CS</span>
    <span class="cell blank"></span>
    <span class="cell blank"></span>
    <nav class="pages"><a href="#" class="cur">Page 1</a><a href="#">Page 2</a><a href="#">Page 3</a><a href="#">Page 4</a><a href="#">Page 5</a></nav>
  </footer>
  <svg class="pointer" viewBox="0 0 12 19"><path d="M.5.500v15l3.500-3.300 2.500 5.800 2.500-1-2.500-5.500h5z" fill="#fff" stroke="#000"/></svg>
</div>
<script src="chart.js"></script>
</body>
</html>
```
FILE: chart.js
```javascript
// Traces are stored in a 1230 x 679 data space: x spans 5 Hz to 90 kHz (log), y the full scale.
const SPAN_X = 1230, SPAN_Y = 679;
const amplitude = [[0,676],[15,563],[22,520],[30,477],[39,430],[48,386],[59,343],[72,300],[87,260],[101,227],[113,205],[121,190],[146,156],[173,130],[180,123],[196,112],[213,101],[224,97],[236,91],[256,83],[263,83],[271,77],[280,78],[286,72],[303,68],[313,67],[320,69],[328,65],[348,63],[363,61],[376,60],[410,56],[424,55],[437,55],[480,53],[552,51],[600,50.500],[656,49.500],[834,49.500],[838,51],[845,49.500],[852,50.500],[886,50.500],[916,52],[963,55],[1013,60],[1041,66],[1073,73],[1091,80],[1113,88],[1128,95],[1146,105],[1163,116],[1178,130],[1196,151],[1206,170],[1214,189],[1221,266],[1222,341],[1223.500,393],[1228.500,609]];
const phase = [[0,648],[8,623],[22,580],[42,521],[50,506],[59,479],[73,451],[87,424],[105,386],[121,359],[141,330],[172,293],[203,264],[209,259],[223,247],[244,232],[253,229],[261,225],[281,213],[296,207],[309,201],[324,196],[336,191],[366,182],[376,181],[409,174],[459,166],[521,160],[582,156],[626,153],[665,152],[728,150],[793,148],[826,145],[866,144],[886,142],[916,139],[940,137],[953,134],[989,130],[1013,124],[1041,118],[1073,110],[1091,104],[1106,99],[1128,93],[1146,84],[1159,79],[1178,69],[1189,65],[1197,60],[1204,53],[1216,49],[1221,46],[1228,18]];

const svg = document.getElementById('chart');
const NS = 'http://www.w3.org/2000/svg';

function add(name, attrs, text) {
  const el = document.createElementNS(NS, name);
  for (const key in attrs) el.setAttribute(key, attrs[key]);
  if (text) el.textContent = text;
  svg.appendChild(el);
}

function draw() {
  const width = svg.clientWidth, height = svg.clientHeight;
  const left = 79.5, top = 35.5, right = width - 14.5, bottom = height - 40.5;
  const sx = v => left + v * (right - left) / SPAN_X;
  const sy = v => top + v * (bottom - top) / SPAN_Y;
  const fx = f => Math.floor(left + Math.log10(f / 5) / Math.log10(18000) * (right - left)) + 0.5;
  const line = (x1, y1, x2, y2, cls) => add('line', { x1, y1, x2, y2, class: cls });
  svg.replaceChildren();

  for (let decade = 1; decade <= 10000; decade *= 10) {
    for (let n = 1; n < 10; n++) {
      const f = decade * n;
      if (f <= 5 || f >= 90000) continue;
      line(fx(f), top, fx(f), bottom + (n === 1 ? 6 : 0), n === 1 ? 'major' : 'minor');
    }
  }
  for (let i = 0; i <= 6; i++) {
    const y = Math.round(top + i * (bottom - top) / 6 - 0.5) + 0.5;
    line(left - 5, y, left, y, 'axis');
    line(left, y, right, y, i === 6 ? 'axis' : 'major');
    add('text', { x: left - 11, y: y - 4, class: 'ylabel amp' }, (8 - i * 0.5).toFixed(2));
    add('text', { x: left - 11, y: y + 11, class: 'ylabel pha' }, (20 - i * 15).toFixed(2));
  }
  line(left, top, left, bottom + 6, 'axis');
  line(right, top, right, bottom + 6, 'edge');
  add('text', { x: left - 11, y: top - 19, class: 'ylabel amp' }, 'dBu');
  add('text', { x: left - 11, y: bottom + 26, class: 'ylabel pha' }, 'degrees');
  const base = bottom + 21;
  add('text', { x: left, y: base, class: 'amp' }, '5.00 Hz');
  for (const f of [10, 100, 1000, 10000])
    add('text', { x: fx(f), y: base, class: 'amp xmid' }, f.toFixed(2));
  add('text', { x: right, y: base, class: 'ylabel amp' }, '90000.00');

  add('rect', { x: left, y: bottom + 29.5, width: right - left, height: 6, fill: '#ffff00' });
  add('rect', { x: 5, y: top, width: 7, height: bottom - top, fill: '#808080' });
  add('rect', { x: 5, y: sy(318), width: 6, height: 19, fill: '#ffff00' });

  const points = set => set.map(p => sx(p[0]) + ',' + sy(p[1])).join(' ');
  add('polyline', { points: points(phase), class: 'trace-pha' });
  add('polyline', { points: points(amplitude), class: 'trace-amp' });

  for (const [x, y] of [[173, 130], [1041.5, 118]]) {
    line(sx(x) - 9, sy(y), sx(x) + 9, sy(y), 'cursor');
    line(sx(x), sy(y) - 9, sx(x), sy(y) + 9, 'cursor');
  }
  for (const [x, y] of [[665, 50], [665, 152]]) {
    line(sx(x) - 9, sy(y) - 9, sx(x) + 9, sy(y) + 9, 'cursor');
    line(sx(x) + 9, sy(y) - 9, sx(x) - 9, sy(y) + 9, 'cursor');
  }
  for (let i = 0; i < 19; i++)
    add('text', { x: sx(681 + i * 8.24), y: sy(162 - i * i * 0.018), class: 'settle' }, 'S');
  add('text', { x: sx(853), y: sy(156), class: 'settle' }, 'S');
}

new ResizeObserver(draw).observe(svg);
draw();
```
FILE: styles.css
```css
* { box-sizing: border-box; }
html, body { margin: 0; height: 100%; background: #000; }
body { font: 11px/14px "Liberation Sans", Arial, sans-serif; color: #000; }
button, input, select { font: inherit; color: inherit; margin: 0; padding: 0; border: 0; background: none; border-radius: 0; }
h2 { margin: 0; font: inherit; }
a { color: inherit; text-decoration: none; }
.defs { position: absolute; width: 0; height: 0; }
svg text { font-family: "Liberation Sans", Arial, sans-serif; }

.app { position: relative; height: 100vh; min-height: 640px; display: flex; flex-direction: column; border: 1px solid #000; border-top-width: 8px; border-bottom-color: #4b1368; background: #f0f0f0; overflow: hidden; }
.logo { width: 16px; height: 12px; flex: none; }

.titlebar { height: 23px; display: flex; align-items: center; gap: 5px; padding-left: 2px; background: #68007f; color: #fff; font: 12px/16px Roboto, sans-serif; }
.sysbtns { margin-left: auto; display: flex; }
.sysbtns button { width: 46px; height: 22px; display: grid; place-items: center; }
.sysbtns svg { width: 12px; height: 12px; }

.menubar { height: 21px; display: flex; align-items: center; gap: 14px; padding-left: 7px; background: #fff; border-bottom: 1px solid #a0a0a0; font: 12px/18px Roboto, sans-serif; }
.menubar u { text-underline-offset: 2px; }

.toolrow { display: flex; background: #fff; border-bottom: 1px solid #a0a0a0; }
.toolbar { display: flex; align-items: center; height: 29px; padding: 0 7px 0 5px; background: #f0f0f0; border-right: 1px solid #a0a0a0; }
.toolbar button { width: 23px; height: 22px; display: grid; place-items: center; flex: none; }
.toolbar button svg, .cursorbar button svg { width: 16px; height: 16px; overflow: visible; }
.toolbar .on { background: #fafafa; border: 1px solid; border-color: #888 #fff #fff #888; }
.toolbar .drop { width: 15px; }
.drop::before { content: ""; border: 3px solid transparent; border-top: 4px solid #000; border-bottom: 0; }
.toolbar .blue { color: #0000c0; }
.toolbar .dis { color: #aaa; }
.toolbar .redbars { color: #e00000; }
.toolbar i, .cursorbar i { width: 2px; height: 18px; margin: 0 3px; border-left: 1px solid #a0a0a0; border-right: 1px solid #fff; flex: none; }

.setups { height: 25px; display: flex; align-items: center; gap: 6px; padding: 0 8px; }
.setups button { min-width: 53px; height: 21px; padding: 0 8px; background: #f0f0f0; border: 1px solid; border-color: #fff #696969 #696969 #fff; box-shadow: inset -1px -1px #a0a0a0; white-space: nowrap; }

.mdi { flex: 1; min-height: 0; display: grid; grid-template: 1fr 17px / 1fr 19px; border-top: 2px solid #696969; }
.workspace { position: relative; overflow: hidden; background: #ababab; border-left: 1px solid #696969; }
.vscroll { padding: 17px 8px 40px; }
.vscroll span { display: block; width: 2px; height: 100%; background: #858585; }
.hscroll { padding: 8px 40px 0 27px; }
.hscroll span { display: block; height: 2px; background: #858585; }

.win { position: absolute; display: flex; flex-direction: column; padding: 0 8px 8px 7px; border: 1px solid #3c444f; border-radius: 6px 6px 0 0; background: linear-gradient(#bfcddb, #d7e4f2 32px); box-shadow: inset 0 1px #f4f8fc; color: #8a94a0; }
.caption { display: flex; align-items: center; gap: 2px; height: 30px; padding: 8px 1px 3px 0; font: 12px/18px Roboto, sans-serif; flex: none; }
.caption h2 { flex: 1; min-width: 0; margin-left: 3px; overflow: hidden; white-space: nowrap; }
.caption button { width: 32px; height: 18px; display: grid; place-items: center; border: 1px solid #8796ac; border-radius: 2px; background: linear-gradient(#c9d9ea, #b6cade); box-shadow: inset 0 0 0 1px #dbe7f3; flex: none; }
.caption button svg { width: 14px; height: 12px; }
.client { flex: 1; min-height: 0; background: #f0f0f0; color: #000; border: 1px solid; border-color: #696969 #fff #fff #696969; }
.analogue { left: 0; top: 2px; width: 310px; height: 186px; }
.generator { left: 2px; top: 191px; width: 277px; height: 235px; }
.icon { width: 160px; height: 28px; padding: 0 4px; }
.icon .caption { height: 26px; padding: 4px 0; }
.monitor { left: 6px; top: 432px; }
.hiddenwin { left: 2px; top: 883px; }
.octave { left: 317px; right: 4px; top: 3px; bottom: -7px; padding: 0 7px 8px 6px; color: #000; background: linear-gradient(#99b4d1, #b9d1ea 32px); }
.octave .caption { padding-left: 2px; }
.octave .caption button { background: linear-gradient(#c3d6ea, #9fb9d6); border-color: #5c7799; }
.octave .caption button.close { background: linear-gradient(#e09a8c, #c04a30 55%, #d0705a); border-color: #4b1a14; box-shadow: inset 0 0 0 1px #e5a89c; }
.appicon { width: 15px; height: 15px; flex: none; }

.row { display: flex; align-items: center; height: 24px; }
.inputs { padding: 5px 3px 0 6px; }
.name { width: 86px; flex: none; }
.split { display: flex; justify-content: space-between; padding-right: 6px; }
.combo { position: relative; height: 19px; background: #fff; border: 1px solid; border-color: #696969 #fff #fff #696969; box-shadow: inset 1px 1px #a0a0a0, inset -1px -1px #e3e3e3; flex: none; }
.combo select { width: 100%; height: 17px; padding: 0 16px 0 2px; appearance: none; }
.combo::before { content: ""; position: absolute; top: 1px; right: 1px; width: 16px; height: 15px; background: #f0f0f0; border: 1px solid; border-color: #fff #696969 #696969 #fff; pointer-events: none; }
.combo::after { content: ""; position: absolute; top: 7px; right: 6px; border: 3px solid transparent; border-top: 4px solid #000; border-bottom: 0; pointer-events: none; }
.combo.grow { flex: 1; }
.rate { width: 106px; }
.step { width: 140px; }
.num, .txt { height: 19px; background: #fff; border: 1px solid; border-color: #696969 #fff #fff #696969; box-shadow: inset 1px 1px #a0a0a0; }
.num { width: 28px; padding-right: 2px; text-align: right; color: #888; }
.txt { width: 64px; padding-left: 3px; }
.mid { width: 34px; padding-left: 6px; }
.check { display: flex; align-items: center; gap: 7px; margin-left: 5px; }
.check.off { color: #777; }
.check.right { margin-left: auto; width: 48px; }
input[type="checkbox"] { appearance: none; width: 12px; height: 12px; flex: none; background: #fff; border: 1px solid; border-color: #696969 #e3e3e3 #e3e3e3 #696969; box-shadow: inset 1px 1px #404040; }
input[type="checkbox"]:checked::before { content: ""; display: block; width: 8px; height: 8px; margin: 1px; background: #000; clip-path: polygon(0 30%, 35% 62%, 100% 0, 100% 35%, 35% 100%, 0 65%); }
.off input[type="checkbox"]:not(:checked) { background: #f0f0f0; }

.generator .client { padding: 0 3px 3px 6px; }
fieldset { margin: 0; height: 100%; min-width: 0; padding: 3px 6px 0 5px; border: 1px solid #a0a0a0; }
legend { margin-left: 6px; padding: 0 5px; }
fieldset .row { height: 22px; margin-top: 1px; }
fieldset .row:first-of-type { margin-bottom: 2px; }
fieldset .name { width: 75px; }
fieldset .txt { margin-right: 7px; }
fieldset hr { height: 2px; margin: 3px -6px 4px -5px; border: 0; border-top: 1px solid #a0a0a0; border-bottom: 1px solid #fff; }
.onbtn { width: 74px; height: 20px; background: #f8f8f8; border: 1px solid; border-color: #696969 #fff #fff #696969; }
.generator .check { margin-left: 10px; gap: 6px; }
.copybtn { width: 53px; height: 20px; margin-left: auto; color: #999; border: 1px solid; border-color: #fff #696969 #696969 #fff; box-shadow: inset -1px -1px #a0a0a0; }

.body { flex: 1; min-height: 0; display: flex; flex-direction: column; background: #f0f0f0; border-top: 1px solid #8496ac; }
.split-view { flex: 1; min-height: 0; display: flex; }
.traces { width: 237px; flex: none; margin: 0; padding: 3px 1px 0; list-style: none; font: 12px/15px "Liberation Sans", Arial, sans-serif; }
.traces li { display: flex; align-items: center; height: 16px; padding-left: 1px; }
.swatch { width: 16px; height: 14px; margin-left: 4px; flex: none; }
.trace { flex: 1; padding-left: 6px; white-space: nowrap; }
.trace b { display: inline-block; width: 13px; font-weight: 400; }
.sel .trace { background: #0078d7; color: #fff; }
.traces button { width: 14px; height: 14px; flex: none; }
.traces button svg { width: 14px; height: 14px; display: block; }
.plot { flex: 1; min-width: 0; margin: 0 2px 6px 0; background: #000080; border-left: 1px solid #808080; border-top: 1px solid #404060; }
#chart { display: block; width: 100%; height: 100%; font-size: 12px; }
.major, .minor, .edge, .axis { stroke: #a8a8dc; stroke-width: 1; shape-rendering: crispEdges; }
.major { stroke-dasharray: 5 3; }
.minor { stroke-dasharray: 3 2; }
.edge { stroke-width: 2; stroke-dasharray: 4 2; }
.amp { fill: #ffff60; }
.pha { fill: #f020f0; }
.ylabel { text-anchor: end; }
.xmid { text-anchor: middle; }
.trace-amp { fill: none; stroke: #ffff30; stroke-width: 2; }
.trace-pha { fill: none; stroke: #c828dc; stroke-width: 1; }
.cursor { stroke: #fff; stroke-width: 1; }
#chart .settle { fill: #fff; text-anchor: middle; font: 700 13px "Liberation Serif", serif; }

.cursorrow { display: flex; background: #fff; border-top: 1px solid #a0a0a0; flex: none; }
.cursorbar { display: flex; align-items: center; width: 528px; height: 31px; padding-left: 6px; background: #f0f0f0; border-right: 1px solid #a0a0a0; }
.cursorbar label { white-space: nowrap; }
.cursorbar > label:first-child { width: 14px; }
.readout { width: 68px; height: 21px; padding-left: 5px; background: #000; color: #fff; border: 1px solid; border-color: #696969 #fff #fff #696969; }
.cursorbar i { height: 20px; margin: 0 1px; }
.unit { width: 74px; }
.ylab { width: 19px; padding-left: 5px; }
.rel { width: 78px; }
.cursorbar .check { margin-left: 4px; }
.cursorbar button { width: 23px; height: 22px; display: grid; place-items: center; flex: none; }
.cursorbar button + i { margin: 0 3px; }
.cursorbar .rel + i { margin: 0 2px; }
.colour { width: 27px; height: 21px; background: #000; border: 1px solid #555; }
.marker { width: 291px; height: 21px; margin: 0 1px 0 5px; background: #fff; border: 1px solid #696969; }

.status { height: 21px; display: flex; align-items: center; gap: 3px; padding: 2px 4px 0 2px; border-top: 1px solid #fff; }
.alert { margin-right: auto; color: #e00000; font-weight: 700; }
.cell { height: 17px; display: flex; align-items: center; justify-content: center; border: 1px solid; border-color: #a0a0a0 #fff #fff #a0a0a0; }
.sq { width: 16px; }
.sq svg { width: 14px; height: 15px; flex: none; }
.card { width: 41px; flex-direction: column; color: #999; font-size: 10px; line-height: 9px; }
.card svg { width: 14px; height: 5px; }
.arrow { width: 14px; }
.arrow svg { width: 11px; height: 9px; }
.bal { width: 53px; font-size: 12px; }
.hot { background: #f80000; color: #500; border: 0; }
.bnc { width: 51px; font-size: 12px; }
.fs { width: 32px; flex-direction: column; font-size: 10px; line-height: 8px; }
.cs { width: 16px; }
.blank { width: 55px; }
.pages { display: flex; font-size: 11px; line-height: 13px; }
.pages a { width: 44px; height: 16px; padding-top: 1px; text-align: center; border: 1px solid #000; border-width: 1px 2px 1px 1px; border-radius: 0 0 4px 4px; }
.pages .cur { border-top-color: #f0f0f0; font-size: 12px; font-weight: 700; white-space: nowrap; }
.pointer { position: absolute; left: 1066px; top: -3px; width: 12px; height: 19px; }
```
